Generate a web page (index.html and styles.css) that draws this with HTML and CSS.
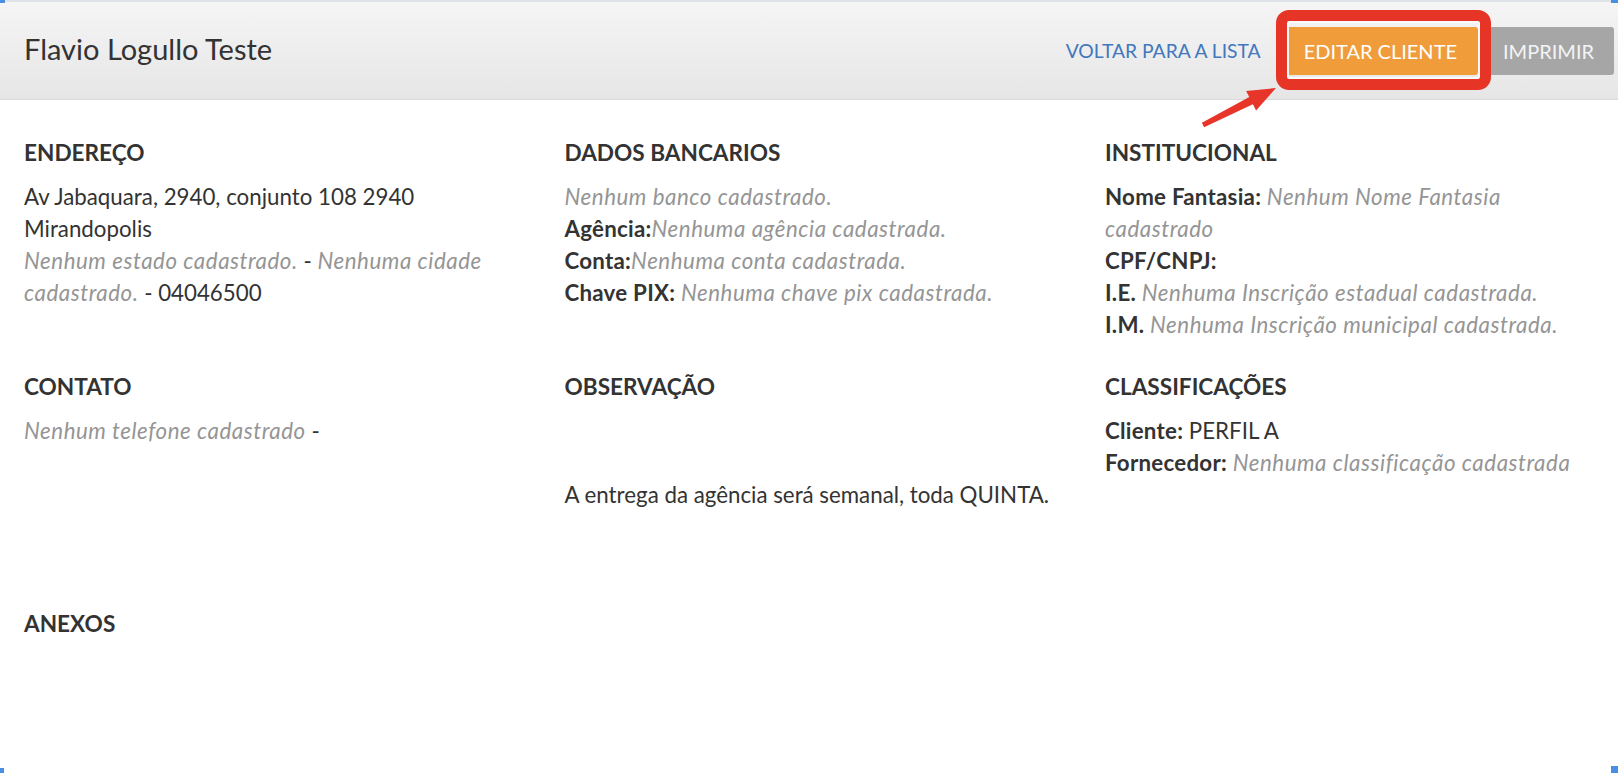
FILE: index.html
```html
<!DOCTYPE html>
<html lang="pt-BR">
<head>
<meta charset="utf-8">
<title>Flavio Logullo Teste</title>
<link rel="stylesheet" href="styles.css">
</head>
<body>
<div class="card">
  <header class="card-header">
    <h1 class="title">Flavio Logullo Teste</h1>
    <div class="actions">
      <a class="link-back" href="#">VOLTAR PARA A LISTA</a>
      <a class="btn btn-orange" href="#">EDITAR CLIENTE</a>
      <a class="btn btn-gray" href="#">IMPRIMIR</a>
    </div>
  </header>

  <main class="content">
    <div class="grid">
      <section class="block">
        <h2 class="heading">ENDEREÇO</h2>
        <p class="text">Av Jabaquara, 2940, conjunto 108 2940 Mirandopolis<br>
          <em class="muted">Nenhum estado cadastrado.</em> - <em class="muted">Nenhuma cidade cadastrado.</em> - 04046500</p>
      </section>
      <section class="block">
        <h2 class="heading">DADOS BANCARIOS</h2>
        <p class="text"><em class="muted">Nenhum banco cadastrado.</em><br>
          <b>Agência:</b><em class="muted">Nenhuma agência cadastrada.</em><br>
          <b>Conta:</b><em class="muted">Nenhuma conta cadastrada.</em><br>
          <b>Chave PIX:</b> <em class="muted">Nenhuma chave pix cadastrada.</em></p>
      </section>
      <section class="block">
        <h2 class="heading">INSTITUCIONAL</h2>
        <p class="text"><b>Nome Fantasia:</b> <em class="muted">Nenhum Nome Fantasia cadastrado</em><br>
          <b>CPF/CNPJ:</b><br>
          <b>I.E.</b> <em class="muted">Nenhuma Inscrição estadual cadastrada.</em><br>
          <b>I.M.</b> <em class="muted">Nenhuma Inscrição municipal cadastrada.</em></p>
      </section>

      <section class="block">
        <h2 class="heading">CONTATO</h2>
        <p class="text"><em class="muted">Nenhum telefone cadastrado</em> -</p>
      </section>
      <section class="block">
        <h2 class="heading">OBSERVAÇÃO</h2>
        <p class="text obs">A entrega da agência será semanal, toda QUINTA.</p>
      </section>
      <section class="block">
        <h2 class="heading">CLASSIFICAÇÕES</h2>
        <p class="text"><b>Cliente:</b> PERFIL A<br>
          <b>Fornecedor:</b> <em class="muted">Nenhuma classificação cadastrada</em></p>
      </section>
    </div>

    <section class="block anexos">
      <h2 class="heading">ANEXOS</h2>
    </section>
  </main>

  <div class="highlight"></div>
  <svg class="arrow" width="90" height="50" viewBox="1195 84 90 50" aria-hidden="true">
    <polygon points="1201.9,122.8 1249.3,97.1 1246.1,90.9 1276,88 1256.1,110.5 1252.9,104.3 1204.1,127.2" fill="#e8352a"/>
  </svg>
  <span class="corner c-tl"></span>
  <span class="corner c-tr"></span>
  <span class="corner c-bl"></span>
  <span class="corner c-br"></span>
</div>
</body>
</html>
```

FILE: styles.css
```css
* { box-sizing: border-box; }

html, body {
  margin: 0;
  padding: 0;
  background: #ffffff;
  overflow: hidden;
}

body {
  font-family: "Lato", "Open Sans", "Liberation Sans", sans-serif;
  color: #333333;
  width: 1618px;
  height: 773px;
}

.card {
  position: relative;
  width: 1618px;
  height: 773px;
  border-top: 2px solid #dfe3e7;
  background: #ffffff;
}

.card-header {
  display: flex;
  align-items: center;
  justify-content: space-between;
  height: 98px;
  padding: 0 4px 0 24px;
  background: linear-gradient(to bottom, #f5f5f5 0%, #e6e6e6 100%);
  border-bottom: 1px solid #dadada;
}

.title {
  margin: 0 0 3px;
  font-size: 29px;
  font-weight: 400;
  line-height: 40px;
  color: #333333;
}

.actions {
  display: flex;
  align-items: center;
}

.link-back {
  font-size: 19.3px;
  color: #4277bd;
  text-decoration: none;
  margin-right: 22px;
}

.btn {
  display: inline-block;
  height: 48px;
  line-height: 48px;
  padding: 0 21px;
  font-size: 20px;
  color: #ffffff;
  text-decoration: none;
  border-radius: 3px;
}

.btn-orange {
  background: #f09c3b;
  margin-right: 4px;
}

.btn-gray {
  background: #a6a6a6;
  color: #f4f4f4;
  width: 132px;
}

.content {
  padding: 41px 0 0 24px;
}

.grid {
  display: grid;
  grid-template-columns: 540.5px 540.5px 1fr;
  row-gap: 34px;
}

.block {
  padding-right: 30px;
}

.heading {
  margin: 0 0 16px;
  font-size: 22.6px;
  font-weight: 700;
  line-height: 24px;
  color: #333333;
}

.text {
  margin: 0;
  font-size: 22.3px;
  line-height: 32px;
}

.text b {
  font-weight: 700;
  letter-spacing: 0.25px;
}

.muted {
  color: #959595;
  font-style: italic;
  letter-spacing: 0.55px;
}

.obs {
  padding: 64px 0;
}

.anexos {
  margin-top: 37px;
}

.highlight {
  position: absolute;
  left: 1276px;
  top: 8px;
  width: 215px;
  height: 80px;
  border: 11px solid #e63426;
  border-radius: 13px;
  box-shadow: inset 0 0 0 2px #fafafa;
}

.arrow {
  position: absolute;
  left: 1195px;
  top: 82px;
}

.corner {
  position: absolute;
  background: #4a90e2;
}
.c-tl { left: 0; top: -2px; width: 5px; height: 3px; }
.c-tr { right: 0; top: -2px; width: 7px; height: 3px; }
.c-bl { left: 0; bottom: 0; width: 4px; height: 5px; }
.c-br { right: 0; bottom: 0; width: 7px; height: 7px; }
```
